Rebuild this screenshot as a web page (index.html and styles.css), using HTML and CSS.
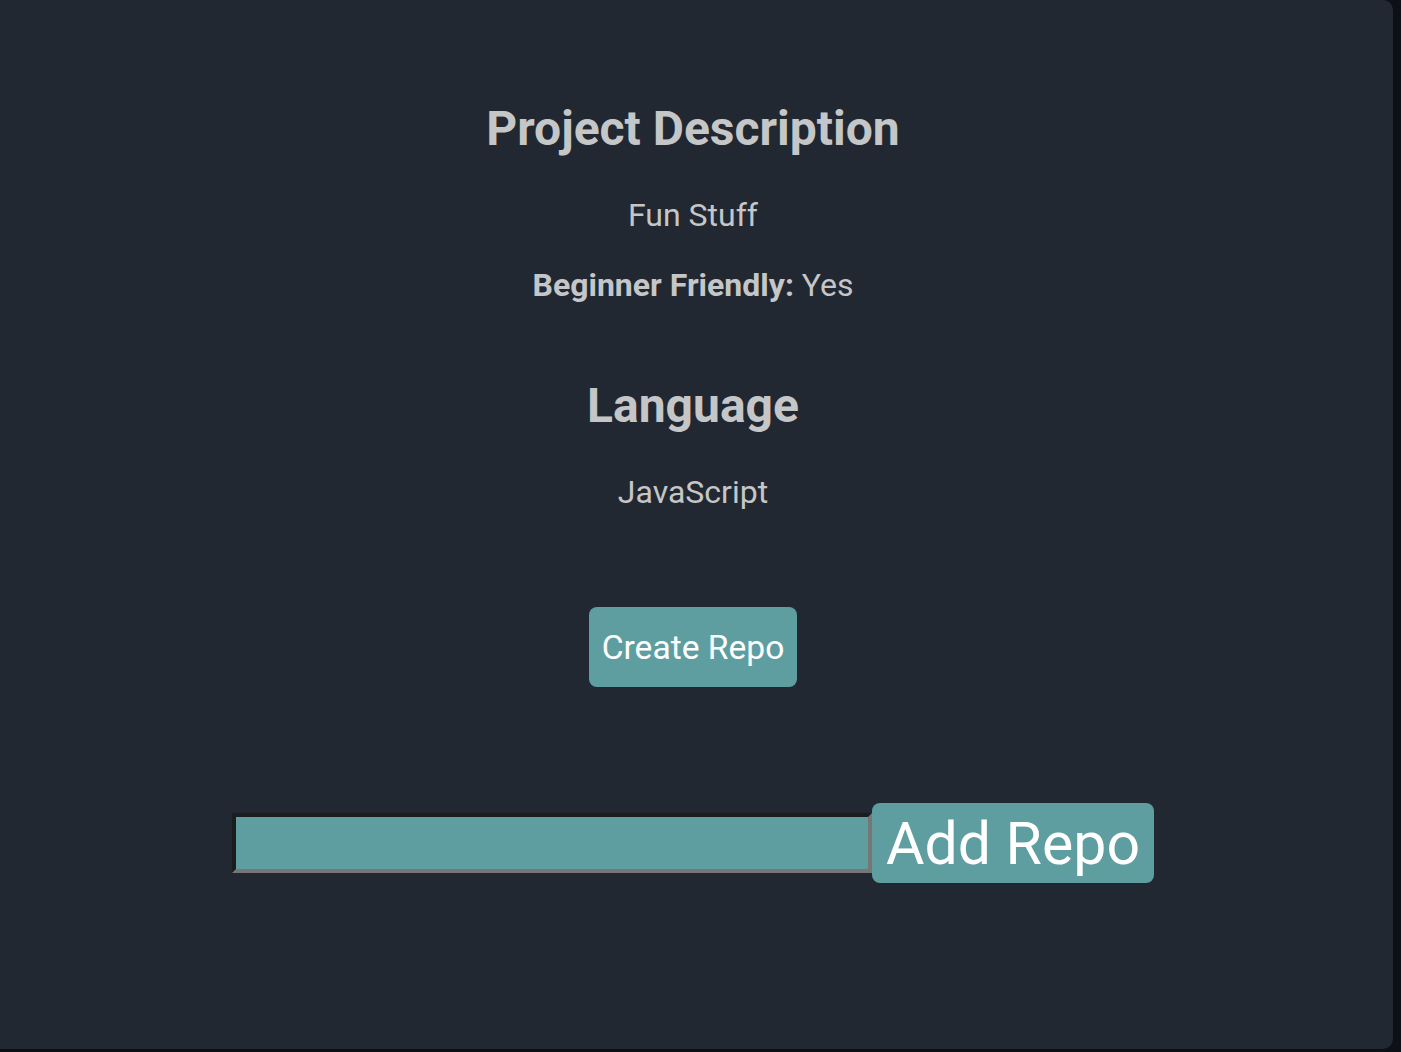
FILE: index.html
```html
<!DOCTYPE html>
<html lang="en">
<head>
<meta charset="utf-8">
<title>Project</title>
<link rel="stylesheet" href="styles.css">
</head>
<body>
<main class="card">
  <section class="section">
    <h2 class="title">Project Description</h2>
    <p class="text">Fun Stuff</p>
    <p class="text"><strong class="label">Beginner Friendly:</strong> Yes</p>
  </section>
  <section class="section">
    <h2 class="title">Language</h2>
    <p class="text">JavaScript</p>
  </section>
  <button class="btn btn-create" type="button">Create Repo</button>
  <form class="repo-form">
    <input class="repo-input" type="text" aria-label="Repository name">
    <button class="btn btn-add" type="button">Add Repo</button>
  </form>
</main>
</body>
</html>
```

FILE: styles.css
```css
html, body {
  margin: 0;
  padding: 0;
  background: #0d1117;
}

body {
  font-family: Roboto, "Noto Sans", "Liberation Sans", sans-serif;
  color: #c5c6c7;
}

.card {
  box-sizing: border-box;
  width: 1393px;
  height: 1049px;
  background: #222831;
  border-radius: 0 10px 10px 0;
  padding: 60px 7px 0 0;
  display: flex;
  flex-direction: column;
  align-items: center;
}

.section {
  display: flex;
  flex-direction: column;
  align-items: center;
  text-align: center;
}

.title {
  font-size: 48px;
  font-weight: 700;
  line-height: normal;
  margin: 40px 0 39px;
  color: #c5c6c7;
}

.section + .section .title {
  margin-top: 41px;
}

.text {
  font-size: 32px;
  font-weight: 400;
  line-height: normal;
  margin: 0 0 32px;
}

.label {
  font-weight: 700;
}

.btn {
  box-sizing: border-box;
  height: 80px;
  border: none;
  border-radius: 8px;
  background: #5f9ea0;
  color: #ffffff;
  font-family: Roboto, "Noto Sans", "Liberation Sans", sans-serif;
  line-height: normal;
  cursor: pointer;
}

.btn-create {
  font-size: 33.6px;
  padding: 0 13px;
  margin-top: 64px;
}

.repo-form {
  display: flex;
  align-items: center;
  margin: 116px 0 0;
}

.repo-input {
  box-sizing: border-box;
  width: 640px;
  height: 60px;
  margin: 0;
  background: #5f9ea0;
  border-width: 4px;
  border-style: solid;
  border-color: #1b1c1e #767676 #767676 #1b1c1e;
  font-size: 32px;
  color: #ffffff;
}

.btn-add {
  font-size: 59px;
  padding: 0 14px;
}
```
